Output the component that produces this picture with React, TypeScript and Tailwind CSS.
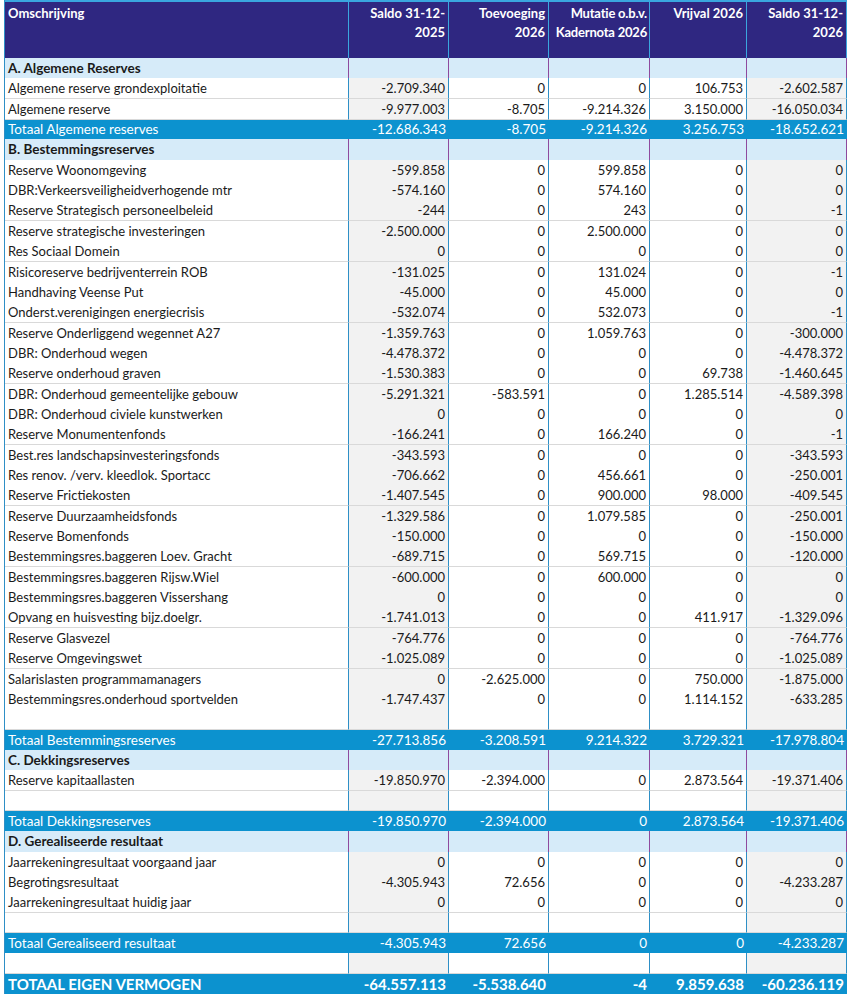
type Kind = 'data' | 'empty' | 'section' | 'total' | 'grand';

type Row = { kind: Kind; label?: string; v?: string[] };

const d = (label: string, ...v: string[]): Row => ({ kind: 'data', label, v });
const t = (label: string, ...v: string[]): Row => ({ kind: 'total', label, v });
const s = (label: string): Row => ({ kind: 'section', label });
const e: Row = { kind: 'empty' };

const rows: Row[] = [
  s('A. Algemene Reserves'),
  d('Algemene reserve grondexploitatie', '-2.709.340', '0', '0', '106.753', '-2.602.587'),
  d('Algemene reserve', '-9.977.003', '-8.705', '-9.214.326', '3.150.000', '-16.050.034'),
  t('Totaal Algemene reserves', '-12.686.343', '-8.705', '-9.214.326', '3.256.753', '-18.652.621'),
  s('B. Bestemmingsreserves'),
  d('Reserve Woonomgeving', '-599.858', '0', '599.858', '0', '0'),
  d('DBR:Verkeersveiligheidverhogende mtr', '-574.160', '0', '574.160', '0', '0'),
  d('Reserve Strategisch personeelbeleid', '-244', '0', '243', '0', '-1'),
  d('Reserve strategische investeringen', '-2.500.000', '0', '2.500.000', '0', '0'),
  d('Res Sociaal Domein', '0', '0', '0', '0', '0'),
  d('Risicoreserve bedrijventerrein ROB', '-131.025', '0', '131.024', '0', '-1'),
  d('Handhaving Veense Put', '-45.000', '0', '45.000', '0', '0'),
  d('Onderst.verenigingen energiecrisis', '-532.074', '0', '532.073', '0', '-1'),
  d('Reserve Onderliggend wegennet A27', '-1.359.763', '0', '1.059.763', '0', '-300.000'),
  d('DBR: Onderhoud wegen', '-4.478.372', '0', '0', '0', '-4.478.372'),
  d('Reserve onderhoud graven', '-1.530.383', '0', '0', '69.738', '-1.460.645'),
  d('DBR: Onderhoud gemeentelijke gebouw', '-5.291.321', '-583.591', '0', '1.285.514', '-4.589.398'),
  d('DBR: Onderhoud civiele kunstwerken', '0', '0', '0', '0', '0'),
  d('Reserve Monumentenfonds', '-166.241', '0', '166.240', '0', '-1'),
  d('Best.res landschapsinvesteringsfonds', '-343.593', '0', '0', '0', '-343.593'),
  d('Res renov. /verv. kleedlok. Sportacc', '-706.662', '0', '456.661', '0', '-250.001'),
  d('Reserve Frictiekosten', '-1.407.545', '0', '900.000', '98.000', '-409.545'),
  d('Reserve Duurzaamheidsfonds', '-1.329.586', '0', '1.079.585', '0', '-250.001'),
  d('Reserve Bomenfonds', '-150.000', '0', '0', '0', '-150.000'),
  d('Bestemmingsres.baggeren Loev. Gracht', '-689.715', '0', '569.715', '0', '-120.000'),
  d('Bestemmingsres.baggeren Rijsw.Wiel', '-600.000', '0', '600.000', '0', '0'),
  d('Bestemmingsres.baggeren Vissershang', '0', '0', '0', '0', '0'),
  d('Opvang en huisvesting bijz.doelgr.', '-1.741.013', '0', '0', '411.917', '-1.329.096'),
  d('Reserve Glasvezel', '-764.776', '0', '0', '0', '-764.776'),
  d('Reserve Omgevingswet', '-1.025.089', '0', '0', '0', '-1.025.089'),
  d('Salarislasten programmamanagers', '0', '-2.625.000', '0', '750.000', '-1.875.000'),
  d('Bestemmingsres.onderhoud sportvelden', '-1.747.437', '0', '0', '1.114.152', '-633.285'),
  e,
  t('Totaal Bestemmingsreserves', '-27.713.856', '-3.208.591', '9.214.322', '3.729.321', '-17.978.804'),
  s('C. Dekkingsreserves'),
  d('Reserve kapitaallasten', '-19.850.970', '-2.394.000', '0', '2.873.564', '-19.371.406'),
  e,
  t('Totaal Dekkingsreserves', '-19.850.970', '-2.394.000', '0', '2.873.564', '-19.371.406'),
  s('D. Gerealiseerde resultaat'),
  d('Jaarrekeningresultaat voorgaand jaar', '0', '0', '0', '0', '0'),
  d('Begrotingsresultaat', '-4.305.943', '72.656', '0', '0', '-4.233.287'),
  d('Jaarrekeningresultaat huidig jaar', '0', '0', '0', '0', '0'),
  e,
  t('Totaal Gerealiseerd resultaat', '-4.305.943', '72.656', '0', '0', '-4.233.287'),
  e,
  { kind: 'grand', label: 'TOTAAL EIGEN VERMOGEN', v: ['-64.557.113', '-5.538.640', '-4', '9.859.638', '-60.236.119'] },
];

// whole-pixel row heights, averaging ~20.35px like the spreadsheet
const ROW = 20.35;
const heightOf = (i: number) => Math.round((i + 1) * ROW) - Math.round(i * ROW);

const cols = 'grid grid-cols-[344px_100px_100px_101px_97px_100px]';

function TableRow({ row, h }: { row: Row; h: number }) {
  if (row.kind === 'section') {
    return (
      <div className={`${cols} bg-[#d6ebf9] text-[#1a1a1a]`} style={{ height: h }}>
        <div className="border-r border-[#8e4a9e] px-[3px] text-[13.5px] font-bold leading-[20px]">{row.label}</div>
        {[0, 1, 2, 3, 4].map((i) => (
          <div key={i} className="border-r border-[#8e4a9e]" />
        ))}
      </div>
    );
  }

  if (row.kind === 'total' || row.kind === 'grand') {
    const grand = row.kind === 'grand';
    return (
      <div
        className={`${cols} ${grand ? 'text-[15px] font-bold' : 'text-[13.5px]'} bg-[#0c92cf] leading-[20px] text-white`}
        style={{ height: h }}
      >
        <div className="px-[3px]">{row.label}</div>
        {row.v!.map((v, i) => (
          <div key={i} className="px-[3px] text-right">{v}</div>
        ))}
      </div>
    );
  }

  return (
    <div className={`${cols} text-[13px] leading-[20px] text-[#1a1a1a]`} style={{ height: h }}>
      <div className="border-r border-b border-r-[#2e8fc6] border-b-[#d9d9d9] bg-white px-[3px]">{row.label}</div>
      {[0, 1, 2, 3, 4].map((i) => (
        <div
          key={i}
          className={`border-r border-b border-r-[#2e8fc6] border-b-[#d9d9d9] px-[3px] text-right ${
            i === 0 || i === 4 ? 'bg-[#f2f2f2]' : 'bg-white'
          }`}
        >
          {row.v ? row.v[i] : ''}
        </div>
      ))}
    </div>
  );
}

export default function App() {
  return (
    <div className="min-h-screen bg-white pl-[4px]" style={{ fontFamily: 'Lato, "Noto Sans", sans-serif' }}>
      <div className="w-[843px] border-l border-[#2e8fc6]">
        {/* Header */}
        <div className={`${cols} h-[58px] border-t-2 border-[#3aa6df] bg-[#2f2781] text-[13px] font-bold leading-[19px] text-white`}>
          <div className="border-r border-[#3aa6df] px-[3px] pt-[2px]">Omschrijving</div>
          <div className="border-r border-[#3aa6df] px-[3px] pt-[2px] text-right">Saldo 31-12-<br />2025</div>
          <div className="border-r border-[#3aa6df] px-[3px] pt-[2px] text-right">Toevoeging<br />2026</div>
          <div className="whitespace-nowrap border-r border-[#3aa6df] px-[2px] pt-[2px] text-right tracking-[-0.2px]">Mutatie o.b.v.<br />Kadernota 2026</div>
          <div className="border-r border-[#3aa6df] px-[3px] pt-[2px] text-right">Vrijval 2026</div>
          <div className="border-r border-[#3aa6df] px-[3px] pt-[2px] text-right">Saldo 31-12-<br />2026</div>
        </div>

        {rows.map((row, i) => (
          <TableRow key={i} row={row} h={heightOf(i)} />
        ))}
      </div>
    </div>
  );
}
